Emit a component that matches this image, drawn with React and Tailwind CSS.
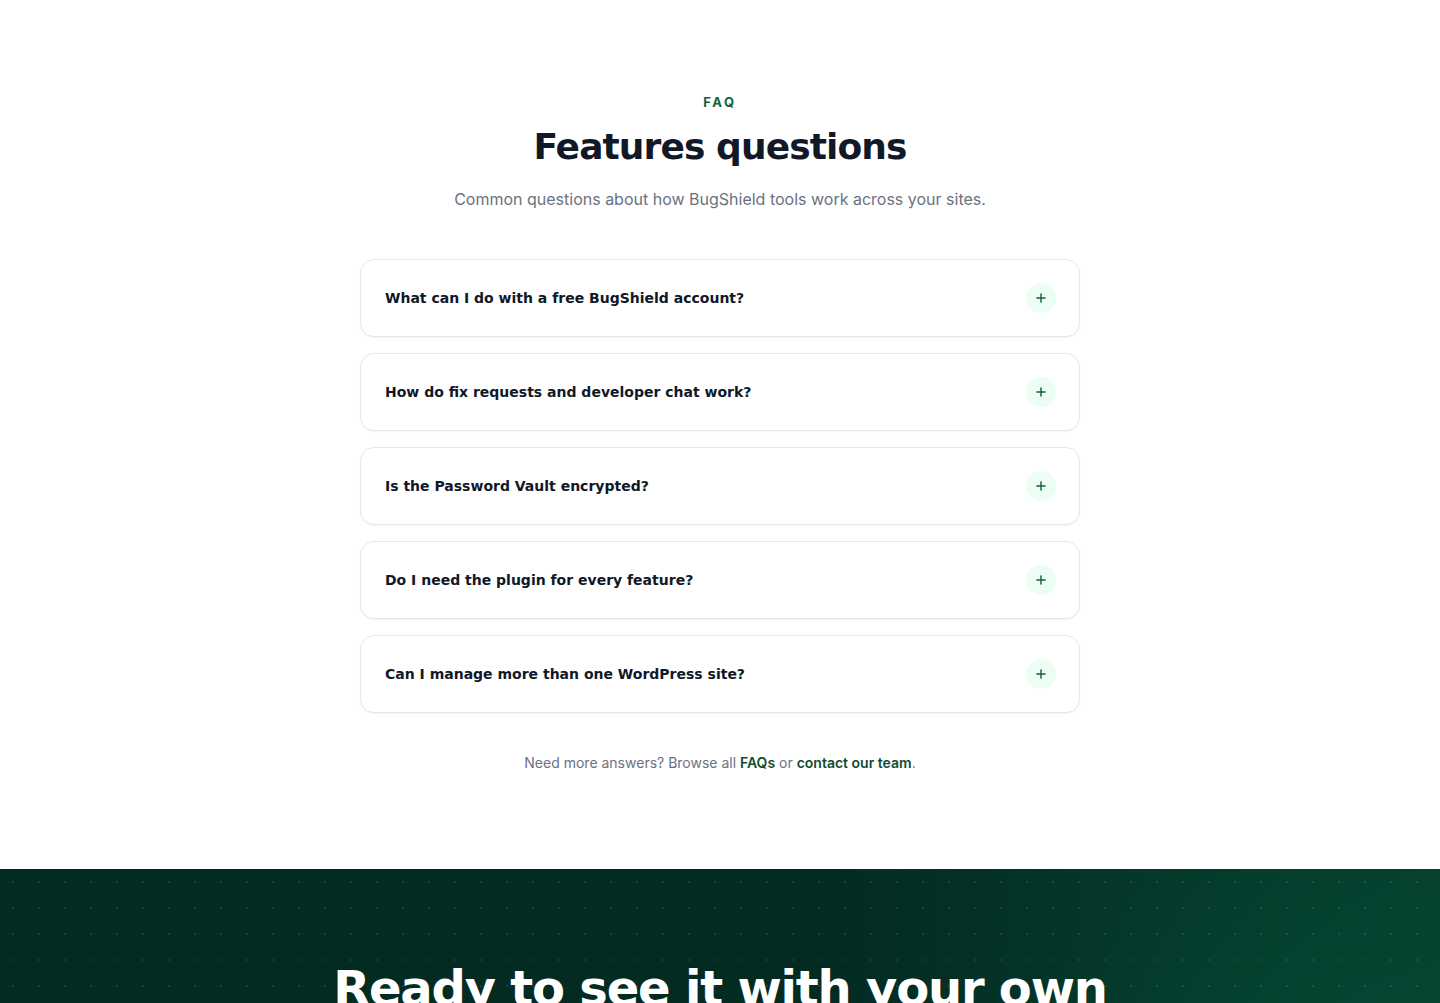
import { Plus } from "lucide-react";

const QUESTIONS = [
  "What can I do with a free BugShield account?",
  "How do fix requests and developer chat work?",
  "Is the Password Vault encrypted?",
  "Do I need the plugin for every feature?",
  "Can I manage more than one WordPress site?",
];

const dejavu = "font-['DejaVu_Sans',sans-serif]";
const inter = "font-['Inter',sans-serif]";

function FaqItem({ question }) {
  return (
    <div className="flex items-center justify-between rounded-[14px] border border-gray-200 bg-white py-[23px] pl-6 pr-[23px] shadow-[0_1px_2px_rgba(16,24,40,0.04)]">
      <span className={`${dejavu} text-sm font-bold text-gray-900`}>{question}</span>
      <span className="flex h-[30px] w-[30px] items-center justify-center rounded-full bg-[#ecfdf3] text-[#14603f]">
        <Plus size={14} strokeWidth={2.5} />
      </span>
    </div>
  );
}

export default function App() {
  return (
    <div className="min-h-screen w-full bg-white">
      <section className="flex flex-col items-center px-6 pb-[96px] pt-[94px]">
        <p className={`${inter} text-[13px] font-bold uppercase leading-4 tracking-[0.2em] text-[#14603f]`}>FAQ</p>
        <h2 className={`${dejavu} mt-[17px] text-4xl font-bold leading-10 tracking-tight text-[#111827]`}>
          Features questions
        </h2>
        <p className={`${inter} mt-5 text-base text-gray-500`}>
          Common questions about how BugShield tools work across your sites.
        </p>

        <div className="mt-12 flex w-[720px] flex-col gap-4">
          {QUESTIONS.map((q) => (
            <FaqItem key={q} question={q} />
          ))}
        </div>

        <p className={`${inter} mt-10 text-sm text-gray-500`}>
          Need more answers? Browse all{" "}
          <a href="#" className="font-semibold text-[#0f4d33]">
            FAQs
          </a>{" "}
          or{" "}
          <a href="#" className="font-semibold text-[#0f4d33]">
            contact our team
          </a>
          .
        </p>
      </section>

      <section className="relative overflow-hidden bg-[linear-gradient(90deg,#032b22_0%,#032b22_58%,#04382a_80%,#05402e_100%)] pt-[89px] pb-24">
        <div className="pointer-events-none absolute inset-0 bg-[radial-gradient(circle_at_93%_90%,rgba(6,90,64,0.4),transparent_25%)]" />
        <div className="pointer-events-none absolute inset-0 bg-[radial-gradient(rgba(255,255,255,0.09)_1px,transparent_1.2px)] bg-[length:26px_26px]" />
        <h2 className={`${dejavu} relative text-center text-5xl font-bold leading-tight tracking-tight text-white`}>
          Ready to see it with your own
          <br />
          site?
        </h2>
      </section>
    </div>
  );
}
